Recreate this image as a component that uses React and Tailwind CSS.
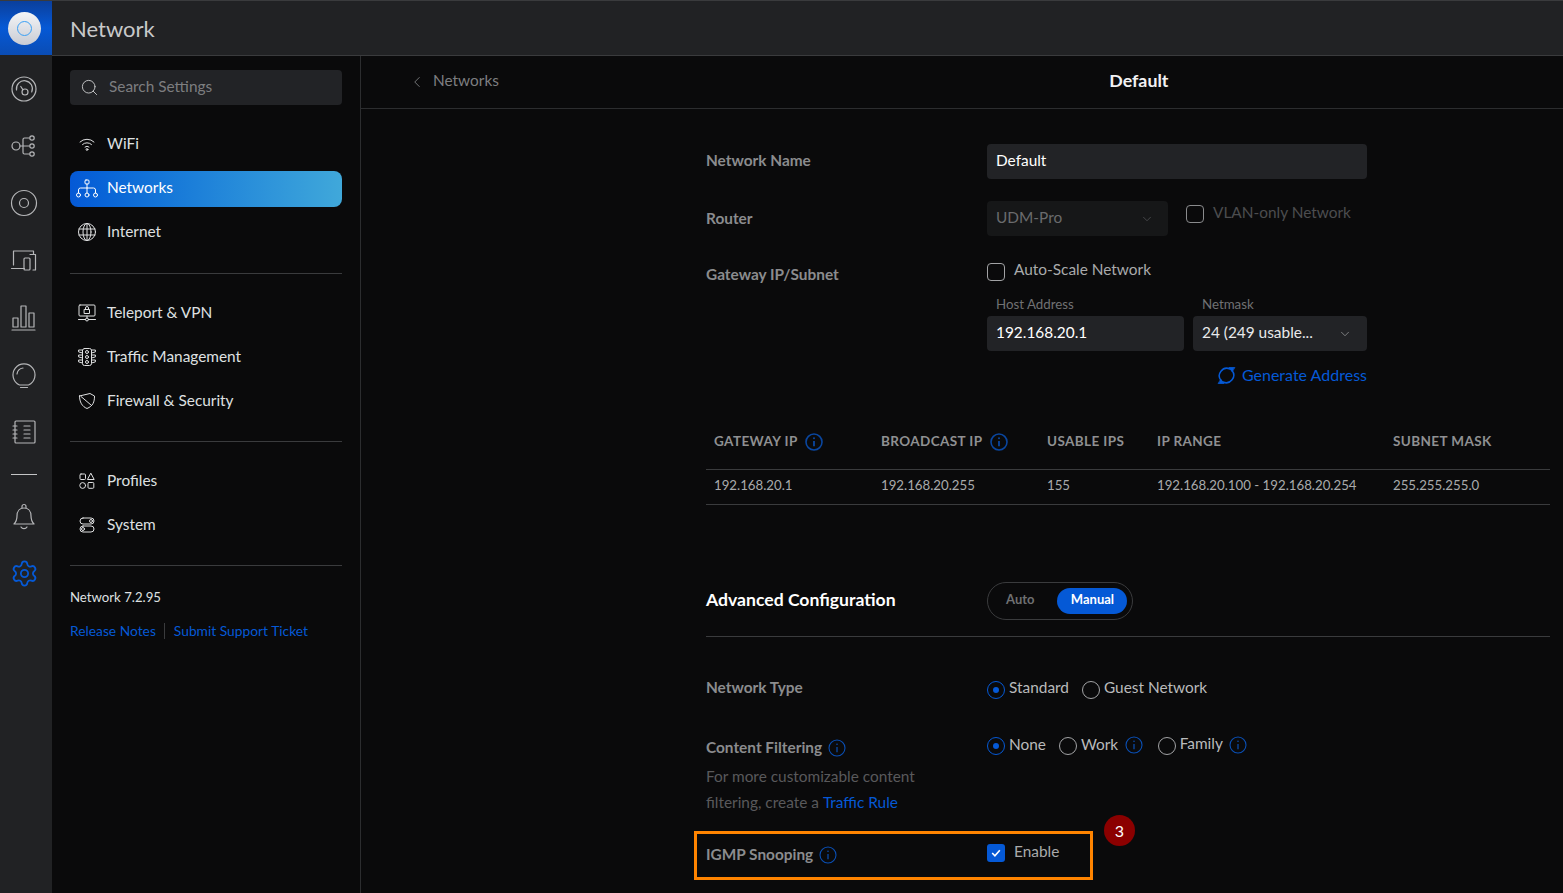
import { ChevronDown, ChevronLeft, Search, Settings } from "lucide-react";

const stroke = {
  fill: "none",
  stroke: "currentColor",
  strokeWidth: 1,
  strokeLinecap: "round",
  strokeLinejoin: "round",
};

function RailIcon({ children, className = "h-[57.2px]" }) {
  return (
    <div className={`flex w-full items-center justify-center text-[#b5b6b8] ${className}`}>
      <svg width="28" height="28" viewBox="0 0 28 28" {...stroke} strokeWidth={1.2}>
        {children}
      </svg>
    </div>
  );
}

function NavIcon({ children }) {
  return (
    <svg width="20" height="20" viewBox="0 0 20 20" {...stroke} className="shrink-0">
      {children}
    </svg>
  );
}

function NavItem({ icon, label, active }) {
  return (
    <div
      className={`flex h-9 items-center gap-[10px] rounded-lg pl-[7px] text-[15.4px] ${
        active
          ? "mt-px -mb-px bg-gradient-to-r from-[#0559d6] to-[#40a8da] text-white"
          : "text-[#dfe0e1]"
      }`}
    >
      {icon}
      <span className={active ? "relative -top-px" : ""}>{label}</span>
    </div>
  );
}

function Info({ size = 18, heavy, className = "text-[#0a4fb5]" }) {
  return (
    <svg width={size} height={size} viewBox="0 0 18 18" className={`shrink-0 ${className}`} fill="none" stroke="currentColor">
      <circle cx="9" cy="9" r="8" strokeWidth={heavy ? 1.6 : 1.1} />
      <path d="M9 8v5.2" strokeWidth={heavy ? 1.8 : 1.2} />
      <circle cx="9" cy="5.200" r={heavy ? 1 : 0.8} fill="currentColor" stroke="none" />
    </svg>
  );
}

function Radio({ label, checked, info }) {
  return (
    <div className="flex items-center text-[15.4px] text-[#b9babb]">
      <span className={`mt-0.5 mr-[4px] flex h-[18px] w-[18px] items-center justify-center rounded-full border ${checked ? "border-[#0559d6]" : "border-[#a2a3a5]"}`}>
        {checked && <span className="h-[6px] w-[6px] rounded-full bg-[#0559d6]" />}
      </span>
      <span className="relative -top-px">{label}</span>
      {info && <Info className="ml-[6.5px] text-[#0a4fb5]" />}
    </div>
  );
}

function Checkbox({ disabled }) {
  return <span className={`h-[18px] w-[18px] shrink-0 rounded-[4px] border ${disabled ? "border-[#8a8b8d]" : "border-[#a2a3a5]"}`} />;
}

function Divider() {
  return <div className="h-px bg-[#3a3b3d]" />;
}

const columns = [
  { title: "GATEWAY IP", info: true, value: "192.168.20.1", width: "w-[167px]" },
  { title: "BROADCAST IP", info: true, value: "192.168.20.255", width: "w-[166px]" },
  { title: "USABLE IPS", value: "155", width: "w-[110px]" },
  { title: "IP RANGE", value: "192.168.20.100 - 192.168.20.254", width: "w-[236px]" },
  { title: "SUBNET MASK", value: "255.255.255.0", width: "flex-1" },
];

export default function App() {
  return (
    <div className="flex h-[893px] w-[1563px] overflow-hidden bg-[#0a0a0b] font-['Lato',sans-serif] text-[15.4px] text-[#dfe0e1]">
      {/* Rail */}
      <aside className="flex w-[52px] shrink-0 flex-col items-center bg-[#212224]">
        <div className="flex h-[55px] w-full items-center justify-center border-t border-[#3a3b3d] bg-gradient-to-b from-[#0a3f9c] via-[#0559d6] to-[#0a4cb4] pr-1">
          <div className="flex h-[33px] w-[33px] items-center justify-center rounded-full bg-gradient-to-b from-[#f4f5f7] to-[#c9ccd4]">
            <div className="h-[15px] w-[15px] rounded-full border-[1.5px] border-[#3aa0f5]" />
          </div>
        </div>
        <div className="flex w-full flex-col items-center pr-1">
          <div className="mt-[5px] w-full">
            <RailIcon>
              <circle cx="14" cy="14" r="12" />
              <path d="M6.500 15a8 8 0 1 1 15.200 2" />
              <circle cx="15" cy="17" r="3" />
              <path d="M13 14.800 10.800 11.500" />
            </RailIcon>
            <RailIcon>
              <circle cx="6" cy="14" r="4" />
              <path d="M10 14h9M13 14v-6.500a1.500 1.500 0 0 1 1.500-1.500H19M13 14v6.500a1.500 1.500 0 0 0 1.500 1.500H19" />
              <circle cx="22" cy="6" r="2.200" />
              <circle cx="22" cy="14" r="2.200" />
              <circle cx="22" cy="22" r="2.200" />
            </RailIcon>
            <RailIcon>
              <circle cx="14" cy="14" r="12.500" />
              <circle cx="14" cy="14" r="4.500" />
            </RailIcon>
            <RailIcon>
              <path d="M3.500 19V5h20v3M1.500 22.500h13" />
              <rect x="14" y="12" width="6" height="12" rx="1" />
              <path d="M20 8.500h5.500V24H23" />
            </RailIcon>
            <RailIcon>
              <rect x="3" y="15" width="5" height="9" />
              <rect x="11" y="3" width="5" height="21" />
              <rect x="19" y="10" width="5" height="14" />
              <path d="M2 27h23" />
            </RailIcon>
            <RailIcon>
              <path d="M9.500 24a11 11 0 1 1 9 0Z" />
              <path d="M7 13a7 7 0 0 1 6-6M10.500 26.500h7" />
            </RailIcon>
            <RailIcon>
              <rect x="5" y="3" width="20" height="22" rx="1" />
              <path d="M3 8h4M3 12h4M3 16h4M3 20h4M14 8h6M14 12h6M14 16h6M14 20h6" />
            </RailIcon>
          </div>
          <div className="mt-[14px] h-px w-[26px] bg-[#c4c5c6]" />
          <div className="mt-[13.5px] w-full">
            <RailIcon className="h-[56px]">
              <path d="M4 21c2-2 3-4 3-8 0-5 3-8 7-8s7 3 7 8c0 4 1 6 3 8Z" />
              <path d="M12 5V3.500a2 2 0 0 1 4 0V5M11 24a3.500 3.500 0 0 0 6 0" />
            </RailIcon>
            <div className="mt-px flex h-[56px] w-full items-center justify-center text-[#0559d6]">
              <Settings size={29} strokeWidth={1.5} />
            </div>
          </div>
        </div>
      </aside>

      <div className="flex min-w-0 flex-1 flex-col">
        {/* Top bar */}
        <header className="flex h-[56px] shrink-0 items-center border-b border-t border-[#3a3b3d] bg-[#212224] pl-[18px] text-[22px] text-[#c8c9ca]">
          Network
        </header>

        <div className="flex min-h-0 flex-1">
          {/* Settings nav */}
          <nav className="w-[309px] shrink-0 border-r border-[#2c2d2f] px-[18px] pt-[14px]">
            <div className="flex h-[35px] items-center gap-[10px] rounded bg-[#222326] pl-[10px] text-[#7d7e80]">
              <Search size={19} strokeWidth={1.2} className="text-[#c5c6c7]" />
              <span className="relative -top-px">Search Settings</span>
            </div>

            <div className="mt-[21px] flex flex-col gap-2">
              <NavItem
                label="WiFi"
                icon={
                  <NavIcon>
                    <path d="M3 8a10 10 0 0 1 14 0M5.500 10.500a6.500 6.500 0 0 1 9 0M8 13a3 3 0 0 1 4 0" />
                    <circle cx="10" cy="15.500" r="0.900" />
                  </NavIcon>
                }
              />
              <NavItem
                active
                label="Networks"
                icon={
                  <svg width="24" height="24" viewBox="0 0 24 24" {...stroke} className="-mx-[2px] shrink-0 text-white">
                    <rect x="10" y="3" width="4" height="4" rx="1" />
                    <path d="M12 7v4M3.500 16v-3a2 2 0 0 1 2-2h13a2 2 0 0 1 2 2v3M12 11v5" />
                    <circle cx="3.500" cy="18" r="2" />
                    <circle cx="12" cy="18" r="2" />
                    <circle cx="20.500" cy="18" r="2" />
                  </svg>
                }
              />
              <NavItem
                label="Internet"
                icon={
                  <NavIcon>
                    <circle cx="10" cy="10" r="8.500" />
                    <ellipse cx="10" cy="10" rx="4" ry="8.500" />
                    <path d="M10 1.500v17M2 7h16M2 13h16" />
                  </NavIcon>
                }
              />
            </div>

            <div className="mt-[23px]"><Divider /></div>

            <div className="mt-[21px] flex flex-col gap-2">
              <NavItem
                label="Teleport & VPN"
                icon={
                  <NavIcon>
                    <rect x="2" y="2" width="16" height="11" rx="1" />
                    <rect x="7.500" y="6.500" width="5" height="4" />
                    <path d="M8.500 6.500V5a1.500 1.500 0 0 1 3 0v1.500M1.500 16.500h7M11.500 16.500h7M10 13v2" />
                    <circle cx="10" cy="16.500" r="1.500" />
                  </NavIcon>
                }
              />
              <NavItem
                label="Traffic Management"
                icon={
                  <NavIcon>
                    <rect x="5.500" y="1.500" width="9" height="17" rx="2" />
                    <circle cx="10" cy="5" r="1.500" />
                    <circle cx="10" cy="10" r="1.500" />
                    <circle cx="10" cy="15" r="1.500" />
                    <path d="M2 3h3.500v3L2 5ZM2 8h3.500v3L2 10ZM2 13h3.500v3L2 15ZM18 3h-3.500v3L18 5ZM18 8h-3.500v3L18 10ZM18 13h-3.500v3L18 15Z" />
                  </NavIcon>
                }
              />
              <NavItem
                label="Firewall & Security"
                icon={
                  <NavIcon>
                    <path d="M2.500 5 13 2.500l4.500 2.500c0 6-1.500 10-7.500 12.500C5 15.500 2.500 11 2.500 5Z" />
                    <path d="M4 5.500 14 14" />
                  </NavIcon>
                }
              />
            </div>

            <div className="mt-[22px]"><Divider /></div>

            <div className="mt-[21px] flex flex-col gap-2">
              <NavItem
                label="Profiles"
                icon={
                  <NavIcon>
                    <rect x="3" y="3" width="5.500" height="5.500" rx="1" />
                    <path d="m14 2.500 3.200 6h-6.400Z" />
                    <circle cx="5.700" cy="14.500" r="2.900" />
                    <rect x="11" y="11.500" width="5.800" height="5.800" rx="1" />
                  </NavIcon>
                }
              />
              <NavItem
                label="System"
                icon={
                  <NavIcon>
                    <rect x="3" y="3" width="14" height="6" rx="3" />
                    <rect x="3" y="11" width="14" height="6" rx="3" />
                    <circle cx="14" cy="6" r="1.500" />
                    <circle cx="6" cy="14" r="1.500" />
                  </NavIcon>
                }
              />
            </div>

            <div className="mt-[22px]"><Divider /></div>

            <div className="mt-[23px] text-[13.2px] leading-4 text-[#dfe0e1]">Network 7.2.95</div>
            <div className="mt-[18px] flex items-center text-[13.8px] leading-4 text-[#0559d6]">
              <span className="border-r border-[#3a3b3d] pr-2">Release Notes</span>
              <span className="pl-[9px]">Submit Support Ticket</span>
            </div>
          </nav>

          {/* Main panel */}
          <main className="relative min-w-0 flex-1">
            <div className="flex h-[53px] items-center border-b border-[#2c2d2f] pl-[47px]">
              <div className="flex w-[298px] items-center gap-[7px] text-[#7d7e80]">
                <ChevronLeft size={18} strokeWidth={1.2} />
                <span className="relative -top-px">Networks</span>
              </div>
              <div className="relative -top-[2px] w-[866px] pl-[11px] text-center text-[17.8px] font-bold text-[#f2f2f3]">Default</div>
            </div>

            <div className="pl-[345px] pr-[13px]">
              {/* Network name */}
              <div className="mt-[35px] flex items-center">
                <div className="-mt-[2px] w-[281px] font-bold text-[#8b8c8e]">Network Name</div>
                <div className="flex h-[35px] w-[380px] items-center rounded bg-[#222326] pb-[2px] pl-[9px] text-white">Default</div>
              </div>

              {/* Router */}
              <div className="mt-[22px] flex">
                <div className="mt-[6px] w-[281px] font-bold text-[#8b8c8e]">Router</div>
                <div className="flex h-[35px] w-[181px] items-center justify-between rounded bg-[#161718] px-[9px] text-[#6a6b6d]">
                  <span className="relative -top-px">UDM-Pro</span>
                  <ChevronDown size={14} strokeWidth={1.2} className="mr-[5px] text-[#58595b]" />
                </div>
                <div className="ml-[18px] flex h-[25px] items-center gap-[9px] text-[#4c4d4f]">
                  <Checkbox disabled />
                  <span className="relative -top-px">VLAN-only Network</span>
                </div>
              </div>

              {/* Gateway */}
              <div className="mt-[24px] flex">
                <div className="mt-[3px] w-[281px] font-bold text-[#8b8c8e]">Gateway IP/Subnet</div>
                <div className="w-[380px]">
                  <div className="flex items-center gap-[9px] text-[#a9aaab]">
                    <Checkbox />
                    <span className="relative -top-[2px]">Auto-Scale Network</span>
                  </div>
                  <div className="mt-[13px] flex gap-[9px]">
                    <div className="w-[197px]">
                      <div className="pl-[9px] text-[13.3px] leading-4 text-[#707173]">Host Address</div>
                      <div className="mt-[4px] flex h-[35px] items-center rounded bg-[#222326] pl-[9px] text-white">
                        <span className="relative -top-px">192.168.20.1</span>
                      </div>
                    </div>
                    <div className="w-[174px]">
                      <div className="pl-[9px] text-[13.3px] leading-4 text-[#707173]">Netmask</div>
                      <div className="mt-[4px] flex h-[35px] items-center justify-between rounded bg-[#222326] pl-[9px] pr-[15px] text-[#e9e9ea]">
                        <span className="relative -top-px">24 (249 usable...</span>
                        <ChevronDown size={14} strokeWidth={1.2} className="text-[#a2a3a5]" />
                      </div>
                    </div>
                  </div>
                  <div className="relative -top-px mt-[15px] flex items-center justify-end gap-[6px] text-[16px] leading-5 text-[#0559d6]">
                    <svg width="19" height="19" viewBox="0 0 19 19" fill="none" stroke="currentColor" strokeWidth="1.500" strokeLinecap="round" strokeLinejoin="round">
                      <path d="M13 3a7.500 7.500 0 0 0-9 11.500M6 16a7.500 7.500 0 0 0 9-11.500" />
                      <path d="M17.500 1.500H12l3 4ZM1.500 17.500H7l-3-4Z" fill="currentColor" strokeWidth="0.800" />
                    </svg>
                    Generate Address
                  </div>
                </div>
              </div>

              {/* Subnet table */}
              <div className="mt-[34px]">
                <div className="flex h-[49px] items-center pb-[6px] pl-2 text-[13.5px] font-bold tracking-[0.4px] text-[#8f9092]">
                  {columns.map((c) => (
                    <div key={c.title} className={`flex items-center gap-[7px] ${c.width}`}>
                      {c.title}
                      {c.info && <Info heavy className="text-[#0a469f]" />}
                    </div>
                  ))}
                </div>
                <Divider />
                <div className="flex h-[34px] items-center pb-[2px] pl-2 text-[13.25px] text-[#a9aaab]">
                  {columns.map((c) => (
                    <div key={c.title} className={c.width}>{c.value}</div>
                  ))}
                </div>
                <Divider />
              </div>

              {/* Advanced */}
              <div className="mt-[77px] flex items-center pb-[16px]">
                <div className="relative -top-px w-[281px] text-[17.6px] font-bold text-white">Advanced Configuration</div>
                <div className="flex h-[38px] w-[146px] items-center rounded-full border border-[#3a3b3d] pl-[18px] text-[13px] font-bold">
                  <span className="relative -top-px text-[#6f7072]">Auto</span>
                  <span className="ml-[23px] flex h-[26px] w-[70px] items-center justify-center rounded-full bg-[#0559d6] pb-[2px] text-white">Manual</span>
                </div>
              </div>
              <Divider />

              {/* Network type */}
              <div className="mt-[40px] flex items-center">
                <div className="relative -top-px w-[281px] font-bold text-[#8b8c8e]">Network Type</div>
                <div className="flex gap-[13px]">
                  <Radio checked label="Standard" />
                  <Radio label="Guest Network" />
                </div>
              </div>

              {/* Content filtering */}
              <div className="mt-[37px] flex">
                <div className="relative -top-px w-[281px]">
                  <div className="flex items-center gap-[6px] font-bold text-[#8b8c8e]">
                    Content Filtering
                    <Info className="text-[#0a4fb5]" />
                  </div>
                  <div className="mt-[4px] leading-[26px] text-[#59595b]">
                    <div>For more customizable content</div>
                    <div className="flex gap-[4px]">
                      <span>filtering, create a</span>
                      <span className="text-[#0559d6]">Traffic Rule</span>
                    </div>
                  </div>
                </div>
                <div className="-mt-[4px] flex h-[24px] gap-[13px]">
                  <Radio checked label="None" />
                  <Radio label="Work" info />
                  <div className="ml-[2px]">
                    <Radio label="Family" info />
                  </div>
                </div>
              </div>

              {/* IGMP */}
              <div className="mt-[28px] flex items-center">
                <div className="relative -top-px flex w-[281px] items-center gap-[6px] font-bold text-[#8b8c8e]">
                  IGMP Snooping
                  <Info className="text-[#0a4fb5]" />
                </div>
                <div className="relative -top-[3px] flex items-center gap-[9px] text-[#a9aaab]">
                  <span className="flex h-[18px] w-[18px] items-center justify-center rounded-[3px] bg-[#0559d6]">
                    <svg width="12" height="12" viewBox="0 0 11 11" fill="none" stroke="white" strokeWidth="1.500">
                      <path d="m2 5.500 2.500 2.500L9 3" />
                    </svg>
                  </span>
                  <span className="relative -top-px">Enable</span>
                </div>
              </div>
            </div>

            {/* Annotation */}
            <div className="absolute left-[333px] top-[775px] h-[49px] w-[399px] border-[3px] border-[#ff8400]" />
            <div className="absolute left-[743px] top-[759px] flex h-[31px] w-[31px] items-center justify-center rounded-full bg-[#8b0000] text-[16px] text-white">3</div>
          </main>
        </div>
      </div>
    </div>
  );
}
